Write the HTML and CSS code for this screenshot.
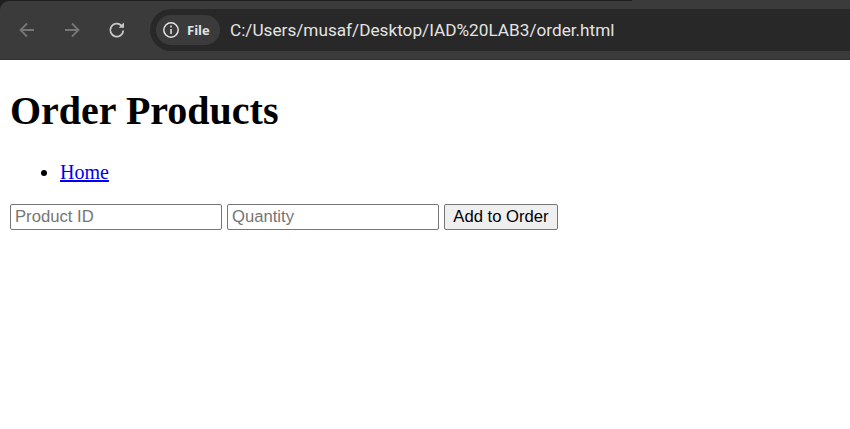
FILE: index.html
```html
<!DOCTYPE html>
<html lang="en">
<head>
    <meta charset="UTF-8">
    <meta name="viewport" content="width=device-width, initial-scale=1.0">
    <title>Order Products</title>
    <link rel="stylesheet" href="styles.css">
</head>
<body>

<div class="browser-bar">
    <div class="toolbar">
        <div class="nav-btns">
            <svg class="nav-icon dim" viewBox="0 0 20 20"><path d="M17 10H4M10 3.5 3.5 10l6.5 6.5"/></svg>
            <svg class="nav-icon dim" viewBox="0 0 20 20"><path d="M3 10h13M10 3.5l6.5 6.5-6.5 6.5"/></svg>
            <svg class="nav-icon" viewBox="0 0 20 20"><path d="M16.3 10.5a6.5 6.5 0 1 1-1.9-5l1.4 1.4"/><path class="arrow-head" d="M17 2.4v5.4h-5.4z"/></svg>
        </div>
        <div class="omnibox">
            <div class="site-chip">
                <svg class="info-icon" viewBox="0 0 18 18"><circle cx="9" cy="9" r="7.2"/><path d="M9 8v5M9 4.6v1.8"/></svg>
                <span>File</span>
            </div>
            <span class="url">C:/Users/musaf/Desktop/IAD%20LAB3/order.html</span>
        </div>
    </div>
</div>

<div class="page">
    <h1>Order Products</h1>
    <ul>
        <li><a href="#">Home</a></li>
    </ul>
    <form class="order-form">
        <input type="text" placeholder="Product ID">
        <input type="text" placeholder="Quantity">
        <button type="submit">Add to Order</button>
    </form>
</div>

</body>
</html>
```

FILE: styles.css
```css
body {
    margin: 0;
    background-color: #fff;
    font-family: "Liberation Serif", serif;
    font-size: 20px;
    color: #000;
}
.browser-bar {
    height: 60px;
    background: linear-gradient(to right, #202020 632px, #3b3b3b 632px);
    padding-top: 1px;
    box-sizing: border-box;
}
.toolbar {
    display: flex;
    align-items: center;
    height: 58px;
    background-color: #3b3b3b;
    border-top-left-radius: 9px;
    border-bottom: 1px solid #333;
}
.nav-btns {
    display: flex;
    gap: 25px;
    padding-left: 17px;
    width: 150px;
    box-sizing: border-box;
}
.nav-icon {
    width: 20px;
    height: 20px;
    fill: none;
    stroke: #c7c7c7;
    stroke-width: 1.8;
}
.nav-icon.dim {
    stroke: #767676;
}
.arrow-head {
    fill: #c7c7c7;
    stroke: none;
}
.omnibox {
    flex: 1;
    display: flex;
    align-items: center;
    height: 42px;
    background-color: #282828;
    border-radius: 21px 0 0 21px;
    padding-left: 6px;
}
.site-chip {
    display: flex;
    align-items: center;
    gap: 7px;
    width: 64px;
    height: 30px;
    box-sizing: border-box;
    padding-left: 6px;
    background-color: #3b3b3b;
    border-radius: 15px;
    font-family: "Open Sans", sans-serif;
    font-size: 13px;
    font-weight: 700;
    color: #e3e3e3;
}
.info-icon {
    width: 18px;
    height: 18px;
    fill: none;
    stroke: #e3e3e3;
    stroke-width: 1.5;
}
.url {
    margin-left: 10px;
    font-family: Roboto, sans-serif;
    font-size: 17.2px;
    color: #e3e3e3;
}
.page {
    margin: 0 10px;
}
h1 {
    font-size: 40px;
    margin: 26.8px 0;
}
ul {
    margin: 20px 0;
    padding-left: 50px;
}
.order-form {
    display: flex;
    align-items: center;
    gap: 5px;
}
input {
    width: 212px;
    height: 26px;
    box-sizing: border-box;
    padding: 1px 4px;
    border: 1px solid #767676;
    border-radius: 2px;
    font-family: "Liberation Sans", sans-serif;
    font-size: 16.67px;
}
input::placeholder {
    color: #757575;
}
button {
    height: 26px;
    width: 114px;
    box-sizing: border-box;
    padding: 0;
    background-color: #efefef;
    border: 1px solid #767676;
    border-radius: 2px;
    font-family: "Liberation Sans", sans-serif;
    font-size: 16.67px;
    color: #000;
}
```
